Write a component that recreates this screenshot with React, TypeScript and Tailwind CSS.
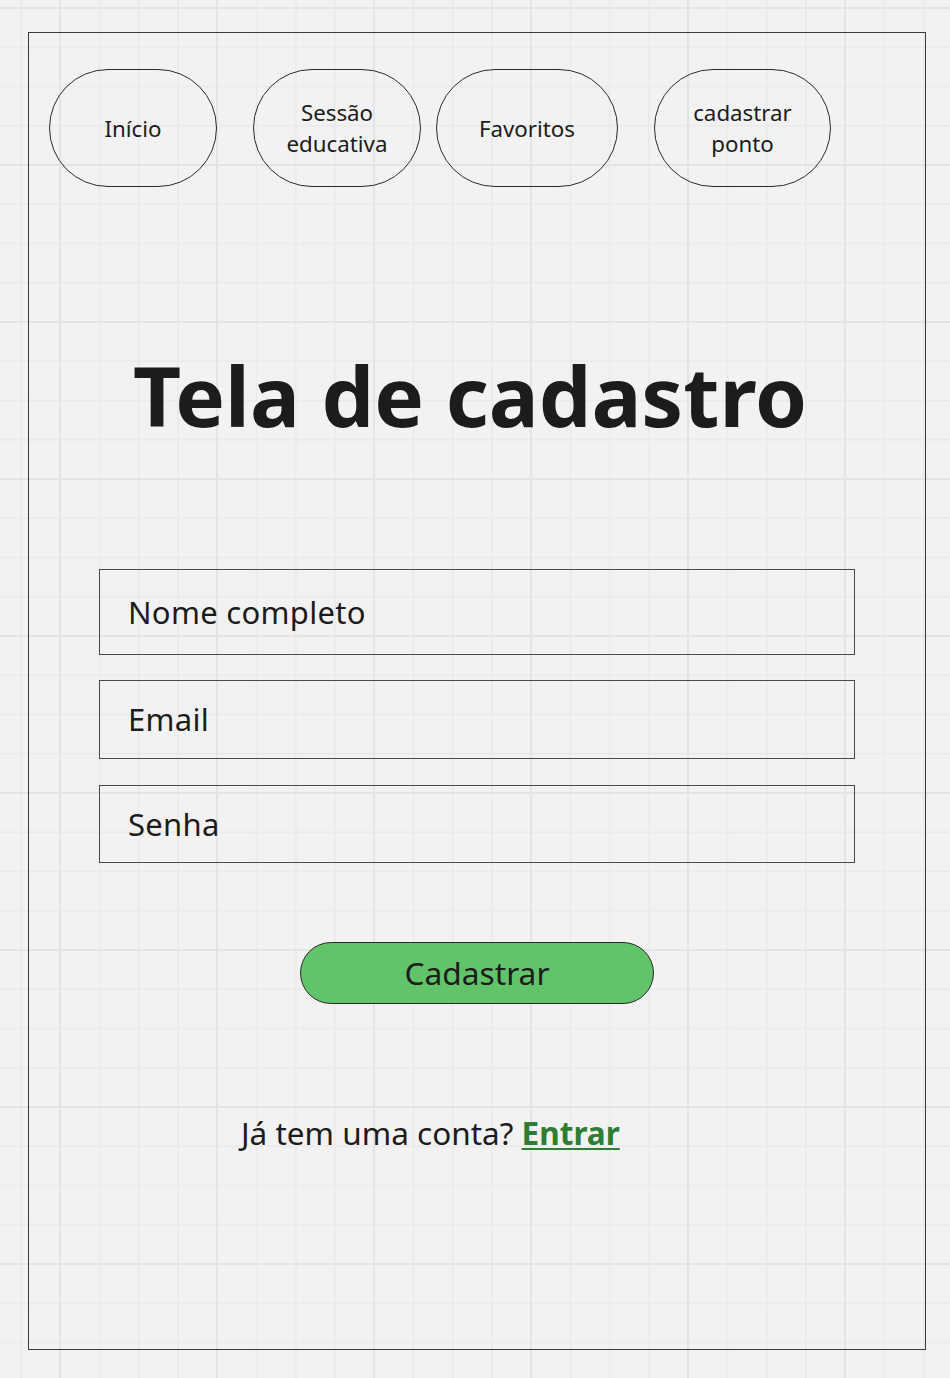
import React from 'react'

const NAV = [
  { label: 'Início', w: 'w-[168px]', ml: 'ml-[20px]' },
  { label: 'Sessão\neducativa', w: 'w-[168px]', ml: 'ml-[36px]' },
  { label: 'Favoritos', w: 'w-[182px]', ml: 'ml-[15px]' },
  { label: 'cadastrar\nponto', w: 'w-[177px]', ml: 'ml-[36px]' },
]

const FIELDS = [
  { label: 'Nome completo', h: 'h-[86px]', mt: 'mt-0' },
  { label: 'Email', h: 'h-[79px]', mt: 'mt-[25px]' },
  { label: 'Senha', h: 'h-[78px]', mt: 'mt-[26px]' },
]

export default function App() {
  return (
    <div
      className="w-[950px] h-[1378px] overflow-hidden bg-[#f2f2f2] pt-[32px] pl-[28px] text-[#1c1c1c] font-['Noto_Sans',sans-serif] bg-[linear-gradient(to_right,#e4e4e4_2px,transparent_2px),linear-gradient(to_bottom,#e4e4e4_2px,transparent_2px),linear-gradient(to_right,#ebebeb_2px,transparent_2px),linear-gradient(to_bottom,#ebebeb_2px,transparent_2px)] bg-[size:157px_157px,157px_157px,39.25px_39.25px,39.25px_39.25px] bg-[position:59px_7px,59px_7px,20px_7px,20px_7px]"
    >
      <div className="w-[898px] h-[1318px] border border-[#3a3a3a]">
        {/* top nav */}
        <div className="flex pt-[36px]">
          {NAV.map((n) => (
            <div
              key={n.label}
              className={`${n.w} ${n.ml} h-[118px] shrink-0 rounded-full border border-[#2a2a2a] flex items-center justify-center text-center text-[22.3px] leading-[31px] whitespace-pre-line`}
            >
              {n.label}
            </div>
          ))}
        </div>

        <h1 className="mt-[166px] pl-[104px] text-[83.4px] leading-[84px] font-bold">Tela de cadastro</h1>

        {/* form */}
        <div className="mt-[132px] ml-[70px] w-[756px]">
          {FIELDS.map((f) => (
            <div key={f.label} className={`${f.h} ${f.mt} border border-[#4a4a4a] flex items-center pl-[28px] text-[31px] tracking-[0.3px]`}>
              {f.label}
            </div>
          ))}
        </div>

        <button className="mt-[79px] ml-[271px] w-[354px] h-[62px] rounded-full bg-[#62c46a] border border-[#2a2a2a] text-[31.7px] leading-none flex items-center justify-center">
          Cadastrar
        </button>

        <p className="mt-[108px] ml-[212px] text-[31.5px] leading-[42px]">
          Já tem uma conta?{' '}
          <a href="#" className="font-bold text-[#2e7d32] underline underline-offset-[3px] decoration-2">Entrar</a>
        </p>
      </div>
    </div>
  )
}
